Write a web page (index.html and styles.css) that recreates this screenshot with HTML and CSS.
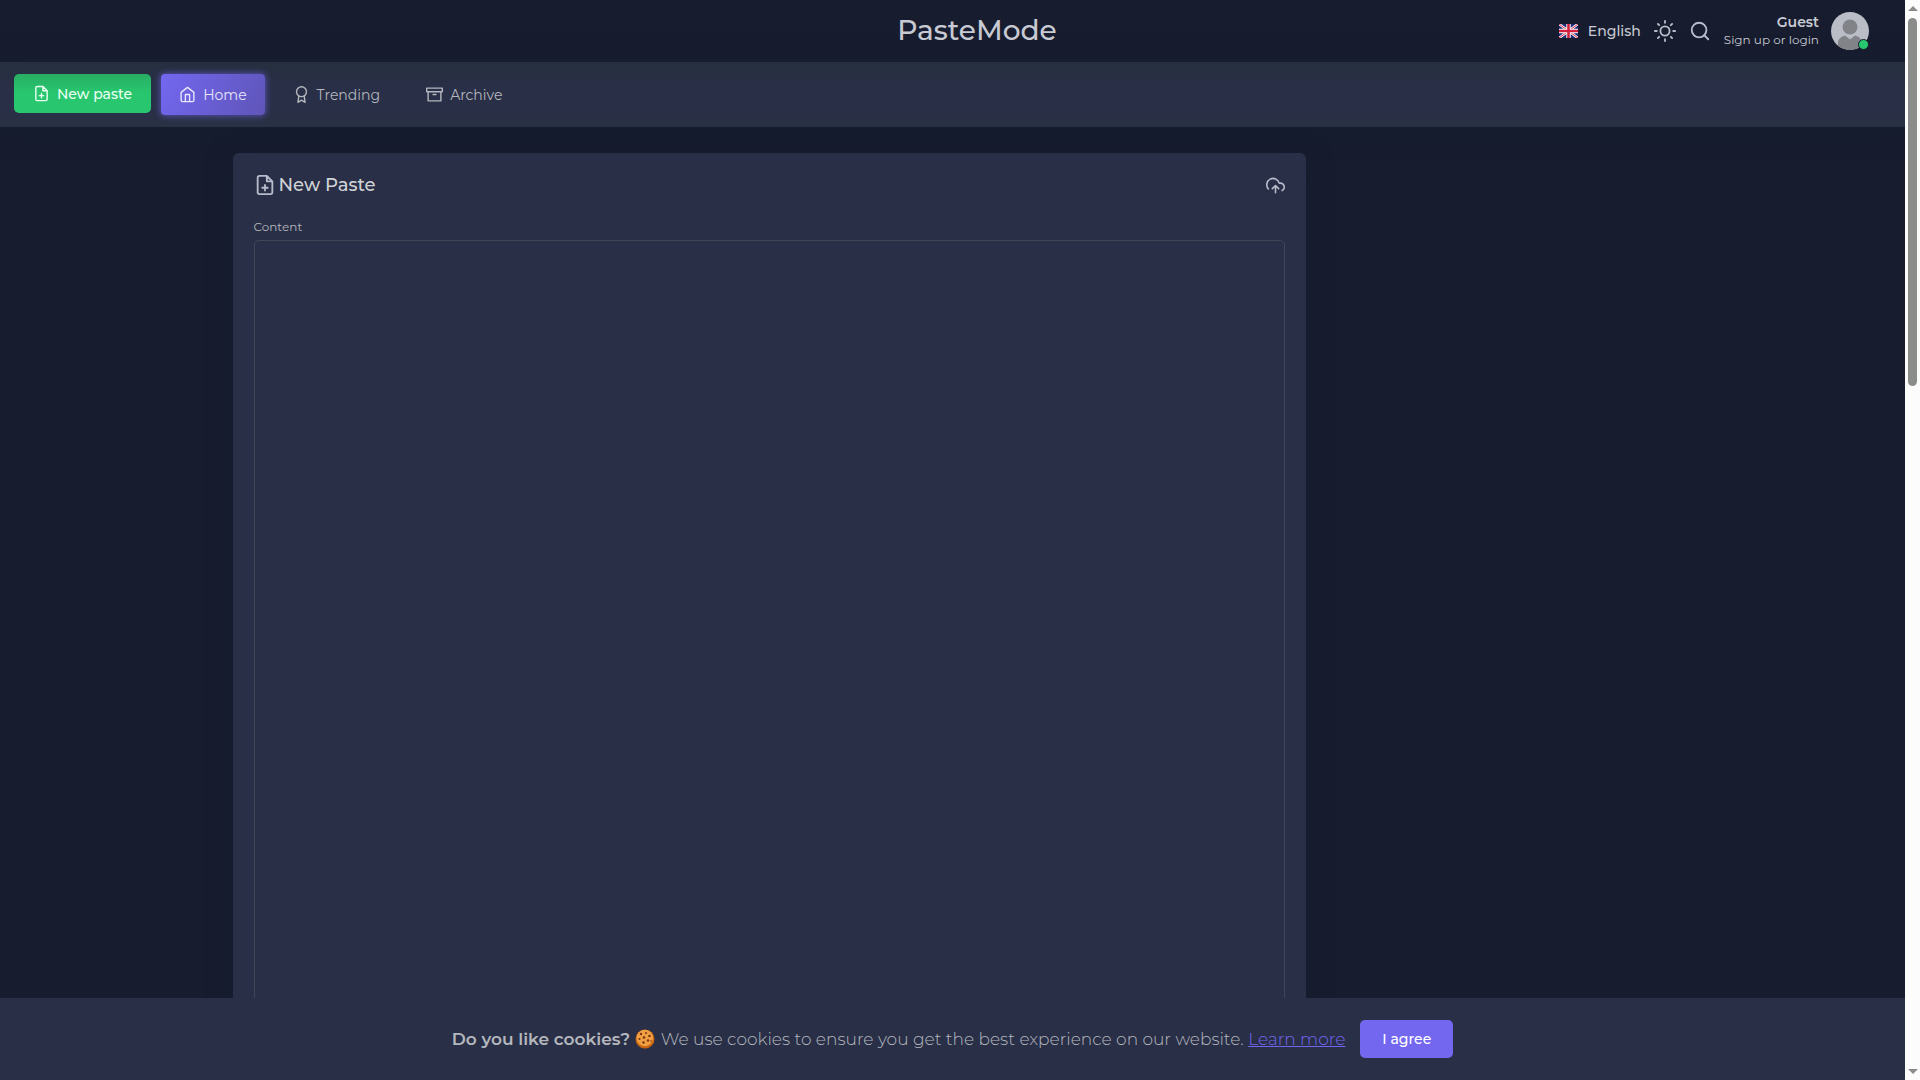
FILE: index.html
```html
<!DOCTYPE html>
<html lang="en">
<head>
    <meta charset="UTF-8">
    <meta name="viewport" content="width=device-width, initial-scale=1.0">
    <title>PasteMode</title>
    <link rel="stylesheet" href="styles.css">
</head>
<body>

    <div class="page">
        <header class="topbar">
            <a class="brand" href="#">PasteMode</a>
            <div class="tools">
                <a class="language" href="#">
                    <svg class="flag" viewBox="0 0 19 14">
                        <rect width="19" height="14" fill="#1b2a72"/>
                        <path d="M0 0l19 14M19 0L0 14" stroke="#fff" stroke-width="2.600"/>
                        <path d="M0 0l19 14M19 0L0 14" stroke="#d3203f" stroke-width="1"/>
                        <path d="M9.5 0v14M0 7h19" stroke="#fff" stroke-width="4.400"/>
                        <path d="M9.5 0v14M0 7h19" stroke="#d3203f" stroke-width="2.600"/>
                    </svg>
                    English
                </a>
                <button type="button" class="icon-btn" aria-label="Light mode">
                    <svg class="icon icon-lg" viewBox="0 0 24 24"><circle cx="12" cy="12" r="5"/><path d="M12 1v2M12 21v2M4.22 4.22l1.42 1.42M18.36 18.36l1.42 1.42M1 12h2M21 12h2M4.22 19.78l1.42-1.42M18.36 5.64l1.42-1.42"/></svg>
                </button>
                <button type="button" class="icon-btn" aria-label="Search">
                    <svg class="icon icon-lg" viewBox="0 0 24 24"><circle cx="11" cy="11" r="8"/><path d="M21 21l-4.35-4.35"/></svg>
                </button>
                <a class="user" href="#">
                    <span class="user-text">
                        <span class="user-name">Guest</span>
                        <span class="user-status">Sign up or login</span>
                    </span>
                    <span class="avatar">
                        <svg viewBox="0 0 38 38">
                            <clipPath id="round"><circle cx="19" cy="19" r="19"/></clipPath>
                            <g clip-path="url(#round)">
                                <rect width="38" height="38" fill="#babdc6"/>
                                <circle cx="19" cy="15" r="7.5" fill="#818389"/>
                                <path d="M7 38v-7c0-4 3-6.500 7-7.500l5 4 5-4c4 1 7 3.500 7 7.500v7z" fill="#818389"/>
                            </g>
                        </svg>
                        <span class="online"></span>
                    </span>
                </a>
            </div>
        </header>

        <nav class="menu">
            <a class="new-btn" href="#">
                <svg class="icon" viewBox="0 0 24 24"><path d="M14 2H6a2 2 0 0 0-2 2v16a2 2 0 0 0 2 2h12a2 2 0 0 0 2-2V8zM14 2v6h6M12 18v-6M9 15h6"/></svg>
                New paste
            </a>
            <a class="menu-link active" href="#">
                <svg class="icon" viewBox="0 0 24 24"><path d="M3 9l9-7 9 7v11a2 2 0 0 1-2 2H5a2 2 0 0 1-2-2zM9 22V12h6v10"/></svg>
                Home
            </a>
            <a class="menu-link" href="#">
                <svg class="icon" viewBox="0 0 24 24"><circle cx="12" cy="8" r="7"/><path d="M8.210 13.890L7 23l5-3 5 3-1.210-9.120"/></svg>
                Trending
            </a>
            <a class="menu-link" href="#">
                <svg class="icon" viewBox="0 0 24 24"><path d="M21 8v13H3V8M1 3h22v5H1zM10 12h4"/></svg>
                Archive
            </a>
        </nav>

        <main class="content">
            <form class="card">
                <div class="card-header">
                    <h1>
                        <svg class="icon icon-lg" viewBox="0 0 24 24"><path d="M14 2H6a2 2 0 0 0-2 2v16a2 2 0 0 0 2 2h12a2 2 0 0 0 2-2V8zM14 2v6h6M12 18v-6M9 15h6"/></svg>
                        New Paste
                    </h1>
                    <button type="button" class="icon-btn" aria-label="Upload file">
                        <svg class="icon icon-md" viewBox="0 0 24 24"><path d="M16 16l-4-4-4 4M12 12v9M20.390 18.390A5 5 0 0 0 18 9h-1.260A8 8 0 1 0 3 16.300"/></svg>
                    </button>
                </div>
                <label for="paste">Content</label>
                <textarea id="paste"></textarea>
            </form>
        </main>

        <div class="cookies">
            <p>
                <b>Do you like cookies?</b>
                <svg class="cookie" viewBox="0 0 20 20" role="img" aria-label="Cookie">
                    <circle cx="10" cy="10" r="9.500" fill="#c9640f"/>
                    <circle cx="9.800" cy="9" r="8.300" fill="#f0a043"/>
                    <g fill="#7a3512">
                        <circle cx="6" cy="5" r="1.200"/><circle cx="11" cy="4" r="1"/><circle cx="14.500" cy="7" r="1.300"/>
                        <circle cx="9" cy="8.500" r="1.300"/><circle cx="4.500" cy="10" r="1.100"/><circle cx="13" cy="11.500" r="1.200"/>
                        <circle cx="8.500" cy="13.500" r="1.300"/><circle cx="16" cy="12" r=".8"/>
                    </g>
                </svg>
                We use cookies to ensure you get the best experience on our website.
                <a href="#">Learn more</a>
            </p>
            <button type="button" class="agree-btn">I agree</button>
        </div>
    </div>

    <div class="scrollbar">
        <span class="arrow-up"></span>
        <span class="thumb"></span>
        <span class="arrow-down"></span>
    </div>

</body>
</html>
```
FILE: styles.css
```css
* {
    box-sizing: border-box;
}
body {
    font-family: Montserrat, Inter, sans-serif;
    font-size: 14px;
    color: #b4b7bd;
    background-color: #171d2f;
    display: flex;
    height: 100vh;
    margin: 0;
    overflow: hidden;
}
a {
    color: inherit;
    text-decoration: none;
}
button {
    font-family: inherit;
    border: none;
    cursor: pointer;
}
.page {
    flex: 1;
    display: flex;
    flex-direction: column;
    min-width: 0;
    overflow: hidden;
}
.icon {
    width: 17px;
    height: 17px;
    fill: none;
    stroke: currentColor;
    stroke-width: 2;
    stroke-linecap: round;
    stroke-linejoin: round;
}
.icon-md {
    width: 19px;
    height: 19px;
}
.icon-lg {
    width: 22px;
    height: 22px;
}
.icon-btn {
    display: flex;
    padding: 0;
    background: none;
    color: #b9bccb;
}

/* Top bar */
.topbar {
    display: grid;
    grid-template-columns: 1fr auto 1fr;
    align-items: center;
    height: 62px;
    flex: none;
    padding: 0 36px 0 85px;
    color: #c8cad3;
}
.brand {
    grid-column: 2;
    font-size: 28px;
    font-weight: 500;
    line-height: 32px;
    padding-bottom: 2px;
}
.tools {
    display: flex;
    justify-content: flex-end;
    align-items: center;
    gap: 13px;
}
.language {
    display: flex;
    align-items: center;
    gap: 10px;
    font-weight: 500;
}
.flag {
    width: 19px;
    height: 14px;
}
.user {
    display: flex;
    align-items: center;
    gap: 12px;
}
.user-text {
    display: flex;
    flex-direction: column;
    align-items: flex-end;
    line-height: 18px;
}
.user-name {
    font-weight: 600;
}
.user-status {
    font-size: 12px;
}
.avatar {
    position: relative;
    width: 38px;
    height: 38px;
}
.online {
    position: absolute;
    right: 0;
    bottom: 0;
    width: 11px;
    height: 11px;
    border: 1px solid #171d2f;
    border-radius: 50%;
    background-color: #28c76f;
}

/* Menu */
.menu {
    display: flex;
    align-items: flex-start;
    height: 65px;
    flex: none;
    padding: 12px 14px;
    background: linear-gradient(#262f3f, #292f47 40%, #292f47 75%, #293244);
    box-shadow: 0 2px 20px rgba(20, 30, 45, 0.8);
}
.new-btn {
    display: flex;
    align-items: center;
    gap: 7px;
    height: 39px;
    margin-right: 10px;
    padding: 0 19px;
    background: linear-gradient(#28ad63, #28c76f 50%);
    color: #e9fff2;
    border-radius: 5px;
    font-weight: 500;
}
.menu-link {
    display: flex;
    align-items: center;
    gap: 7px;
    height: 41px;
    margin-right: 10px;
    padding: 0 18px;
    border-radius: 4px;
}
.active {
    background: linear-gradient(118deg, #7367f0, #5f55b8);
    box-shadow: 0 0 6px 1px rgba(115, 103, 240, 0.6);
    color: #e7e6fb;
}

/* Paste form */
.content {
    display: grid;
    grid-template-columns: 3fr 1fr;
    gap: 9px;
    width: 100%;
    max-width: 1440px;
    margin: 26px auto 0;
}
.card {
    display: flex;
    flex-direction: column;
    padding: 20px 21px;
    background-color: #292f47;
    border-radius: 6px;
    box-shadow: 0 4px 24px rgba(20, 28, 42, 0.6);
}
.card-header {
    display: flex;
    justify-content: space-between;
    align-items: center;
    margin-bottom: 22px;
}
h1 {
    display: flex;
    align-items: center;
    gap: 3px;
    margin: 0;
    color: #d0d2d6;
    font-size: 18px;
    font-weight: 500;
    line-height: 24px;
}
h1 .icon {
    color: #b9bccb;
}
label {
    font-size: 12px;
    line-height: 16px;
    margin-bottom: 5px;
}
textarea {
    width: 100%;
    height: 1000px;
    padding: 10px 14px;
    background: none;
    border: 1px solid #404656;
    border-radius: 5px;
    color: inherit;
    font: inherit;
    resize: none;
}

/* Cookie notice */
.cookies {
    position: fixed;
    left: 0;
    right: 15px;
    bottom: 0;
    display: flex;
    justify-content: center;
    align-items: center;
    gap: 15px;
    height: 82px;
    background-color: #292f47;
    font-size: 17px;
    font-weight: 300;
}
.cookies p {
    margin: 0;
}
.cookies b {
    font-weight: 600;
}
.cookies a {
    color: #7367f0;
    text-decoration: underline;
}
.cookie {
    width: 22px;
    height: 20px;
    vertical-align: -4px;
}
.agree-btn {
    height: 38px;
    padding: 0 22px;
    background-color: #7367f0;
    color: #fff;
    border-radius: 5px;
    font-size: 14px;
    font-weight: 500;
}

/* Scrollbar */
.scrollbar {
    display: flex;
    flex-direction: column;
    align-items: center;
    width: 15px;
    padding: 6px 0;
    background-color: #fcfcfc;
}
.arrow-up,
.arrow-down {
    border: 5px solid transparent;
}
.arrow-up {
    border-top: none;
    border-bottom-color: #8b8d8b;
}
.arrow-down {
    margin-top: auto;
    border-bottom: none;
    border-top-color: #8b8d8b;
}
.thumb {
    width: 9px;
    height: 34.5%;
    margin-top: 7px;
    background-color: #8b8d8b;
    border-radius: 5px;
}
```
